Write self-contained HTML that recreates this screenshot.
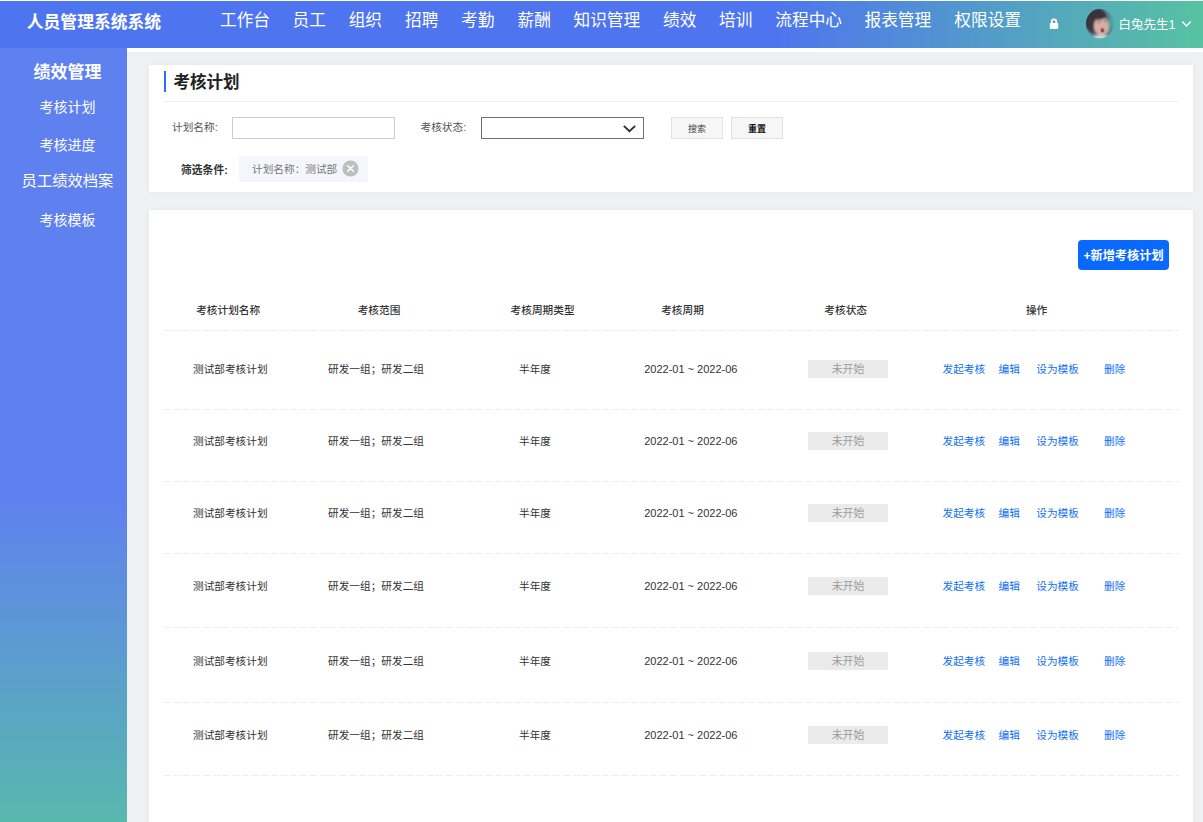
<!DOCTYPE html>
<html lang="zh-CN">
<head>
<meta charset="utf-8">
<title>考核计划</title>
<style>
*{box-sizing:border-box;margin:0;padding:0}
html,body{width:1203px;height:822px;overflow:hidden;background:#eff0f2}
body{position:relative;font-family:"Liberation Sans","Noto Sans CJK SC",sans-serif;font-size:10.67px;color:#333}
.abs{position:absolute;white-space:nowrap}
#topline{left:0;top:0;width:1203px;height:1px;background:#fff}
#header{left:0;top:1px;width:1203px;height:47px;background:linear-gradient(90deg,#4e75ef 0%,#4e75ef 64.5%,#57c2a2 100%)}
#strip{left:127px;top:48px;width:1076px;height:4px;background:#fff}
#logo{left:26.8px;top:2.8px;height:40px;line-height:40px;font-size:16.8px;font-weight:700;color:#fff}
.nav{top:1.5px;height:38px;line-height:38px;font-size:16.7px;font-weight:400;color:#fff}
#sidebar{left:0;top:48px;width:127px;height:774px;background:linear-gradient(180deg,#5f81f0 0%,#5f81f0 58%,#58b8ad 100%)}
.side{left:0;width:135px;text-align:center;color:#fff;font-weight:400}
.card{background:#fff;box-shadow:0 0 6px rgba(0,0,0,.04)}
#card1{left:149px;top:65px;width:1044px;height:127px}
#card2{left:149px;top:210px;width:1044px;height:620px}
.lbl{color:#555;font-size:10.67px;line-height:14px}
.th{font-weight:500;color:#333;line-height:14px;transform:translateX(-50%)}
.td{color:#333;line-height:14px;transform:translateX(-50%)}
.lk{color:#1070f5;line-height:14px}
.dash{left:164px;width:1015px;height:1px;background:repeating-linear-gradient(90deg,#eee 0,#eee 7px,transparent 7px,transparent 9.73px)}
.badge{width:80px;height:17.8px;background:#ebebeb;color:#9c9c9c;text-align:center;line-height:19.5px;left:808px;font-size:10.9px}
</style>
</head>
<body>
<div class="abs" id="header"></div>
<div class="abs" id="topline"></div>
<div class="abs" id="strip"></div>
<div class="abs" id="sidebar"></div>
<div class="abs" id="logo">人员管理系统系统</div>
<div class="abs nav" style="left:220px">工作台</div>
<div class="abs nav" style="left:292.5px">员工</div>
<div class="abs nav" style="left:348.7px">组织</div>
<div class="abs nav" style="left:405px">招聘</div>
<div class="abs nav" style="left:461px">考勤</div>
<div class="abs nav" style="left:517.5px">薪酬</div>
<div class="abs nav" style="left:573.5px">知识管理</div>
<div class="abs nav" style="left:663px">绩效</div>
<div class="abs nav" style="left:719px">培训</div>
<div class="abs nav" style="left:775.3px">流程中心</div>
<div class="abs nav" style="left:864.5px">报表管理</div>
<div class="abs nav" style="left:954.3px">权限设置</div>
<svg class="abs" style="left:1049px;top:18px" width="10" height="12" viewBox="0 0 10 12"><path d="M2.8 5.2V3.6a2.2 2.2 0 0 1 4.4 0V5.2" fill="none" stroke="#fff" stroke-width="1.8"/><rect x="0.8" y="5" width="8.4" height="6" rx="0.8" fill="#fff"/></svg>
<svg class="abs" id="avatar" style="left:1085px;top:8px" width="30" height="32" viewBox="0 0 30 32"><defs><clipPath id="avc"><ellipse cx="14.6" cy="15.8" rx="13.7" ry="14.7"/></clipPath><filter id="avb" x="-10%" y="-10%" width="120%" height="120%"><feGaussianBlur stdDeviation="0.9"/></filter></defs><g clip-path="url(#avc)"><rect width="30" height="32" fill="#5f8390"/><g filter="url(#avb)"><rect x="21" y="0" width="9" height="32" fill="#5c8894"/><ellipse cx="27.2" cy="13" rx="2" ry="5.5" fill="#2fb7a3"/><ellipse cx="11" cy="12.5" rx="11.5" ry="13" fill="#3a3641"/><ellipse cx="16" cy="31.5" rx="10" ry="4.5" fill="#cfd5d8"/><ellipse cx="16.4" cy="18" rx="7.6" ry="9.6" fill="#d4b0a4"/><ellipse cx="13" cy="7.5" rx="8.5" ry="4.2" fill="#37333d"/><ellipse cx="14" cy="13.8" rx="1.3" ry="0.9" fill="#5a4a50"/><ellipse cx="20.2" cy="13.2" rx="1.2" ry="0.9" fill="#5a4a50"/></g><ellipse cx="17.4" cy="22.4" rx="1.5" ry="2.1" fill="#8c2b3d" filter="url(#avb)" opacity="0.95"/><ellipse cx="17.4" cy="22.4" rx="1.1" ry="1.6" fill="#8c2b3d"/></g></svg>
<div class="abs" style="left:1118.6px;top:14.8px;height:20px;line-height:20px;font-size:12.5px;color:#fff;font-weight:400">白兔先生1</div>
<svg class="abs" style="left:1181px;top:20px" width="11" height="8" viewBox="0 0 11 8"><path d="M1.2 1.6L5.5 6L9.8 1.6" fill="none" stroke="#fff" stroke-width="1.4"/></svg>

<div class="abs side" style="top:60.5px;font-size:17px;font-weight:700;line-height:24px">绩效管理</div>
<div class="abs side" style="top:97px;font-size:14px;line-height:20px">考核计划</div>
<div class="abs side" style="top:135px;font-size:14px;line-height:20px">考核进度</div>
<div class="abs side" style="top:171px;font-size:15.3px;line-height:20px">员工绩效档案</div>
<div class="abs side" style="top:209.5px;font-size:14px;line-height:20px">考核模板</div>

<div class="abs card" id="card1"></div>
<div class="abs" style="left:163.8px;top:71px;width:2.4px;height:21px;background:#2e6bf6"></div>
<div class="abs" style="left:173.5px;top:70px;height:24px;line-height:24px;font-size:16.5px;font-weight:700;color:#222">考核计划</div>
<div class="abs" style="left:164px;top:101px;width:1014px;height:1px;background:#eee"></div>
<div class="abs lbl" style="left:172px;top:120.3px">计划名称:</div>
<div class="abs" style="left:232px;top:117px;width:163px;height:21.5px;border:1px solid #ccc;background:#fff"></div>
<div class="abs lbl" style="left:420.5px;top:120.3px">考核状态:</div>
<div class="abs" style="left:481px;top:117px;width:163px;height:21.5px;border:1px solid #707070;background:#fff"></div>
<svg class="abs" style="left:622px;top:124px" width="15" height="10" viewBox="0 0 15 10"><path d="M1.8 1.8L7.5 7.2L13.2 1.8" fill="none" stroke="#2c2c2c" stroke-width="1.8"/></svg>
<div class="abs" style="left:671px;top:117px;width:52px;height:21.5px;border:1px solid #e2e2e2;background:#f6f6f6;text-align:center;line-height:22.5px;font-size:9px;color:#444">搜索</div>
<div class="abs" style="left:731px;top:117px;width:52px;height:21.5px;border:1px solid #e2e2e2;background:#f6f6f6;text-align:center;line-height:22.5px;font-size:9px;color:#111;font-weight:700">重置</div>
<div class="abs" style="left:181px;top:162.7px;line-height:14px;font-size:10.8px;font-weight:700;color:#333">筛选条件:</div>
<div class="abs" style="left:239px;top:156px;width:129px;height:25.7px;background:#f4f6fb;border-radius:2px"></div>
<div class="abs" style="left:252px;top:162px;line-height:14px;font-size:10.67px;color:#777">计划名称：测试部</div>
<svg class="abs" style="left:342px;top:160.1px" width="17" height="17" viewBox="0 0 17 17"><circle cx="8.5" cy="8.5" r="8.1" fill="#bfbfbf"/><path d="M5.7 5.7L11.3 11.3M11.3 5.7L5.7 11.3" stroke="#fff" stroke-width="1.5" stroke-linecap="round"/></svg>

<div class="abs card" id="card2"></div>
<div class="abs" style="left:1078px;top:240px;width:91px;height:30px;border-radius:4px;background:#0969fe;color:#fff;font-weight:700;font-size:12.2px;text-align:center;line-height:33px">+新增考核计划</div>

<div class="abs th" style="left:228.2px;top:303px">考核计划名称</div>
<div class="abs th" style="left:379px;top:303px">考核范围</div>
<div class="abs th" style="left:542.6px;top:303px">考核周期类型</div>
<div class="abs th" style="left:682.5px;top:303px">考核周期</div>
<div class="abs th" style="left:845.7px;top:303px">考核状态</div>
<div class="abs th" style="left:1036.6px;top:303px">操作</div>
<div class="abs dash" style="top:330px"></div>
<div class="abs td" style="left:230.3px;top:362px">测试部考核计划</div>
<div class="abs td" style="left:376px;top:362px">研发一组；研发二组</div>
<div class="abs td" style="left:535px;top:362px">半年度</div>
<div class="abs td" style="left:690.8px;top:362px;font-size:11px">2022-01 ~ 2022-06</div>
<div class="abs badge" style="top:360.3px">未开始</div>
<div class="abs lk" style="left:942.5px;top:362px">发起考核</div>
<div class="abs lk" style="left:998.5px;top:362px">编辑</div>
<div class="abs lk" style="left:1036.3px;top:362px">设为模板</div>
<div class="abs lk" style="left:1104px;top:362px">删除</div>
<div class="abs dash" style="top:408.8px"></div>
<div class="abs td" style="left:230.3px;top:433.5px">测试部考核计划</div>
<div class="abs td" style="left:376px;top:433.5px">研发一组；研发二组</div>
<div class="abs td" style="left:535px;top:433.5px">半年度</div>
<div class="abs td" style="left:690.8px;top:433.5px;font-size:11px">2022-01 ~ 2022-06</div>
<div class="abs badge" style="top:431.8px">未开始</div>
<div class="abs lk" style="left:942.5px;top:433.5px">发起考核</div>
<div class="abs lk" style="left:998.5px;top:433.5px">编辑</div>
<div class="abs lk" style="left:1036.3px;top:433.5px">设为模板</div>
<div class="abs lk" style="left:1104px;top:433.5px">删除</div>
<div class="abs dash" style="top:480.8px"></div>
<div class="abs td" style="left:230.3px;top:506px">测试部考核计划</div>
<div class="abs td" style="left:376px;top:506px">研发一组；研发二组</div>
<div class="abs td" style="left:535px;top:506px">半年度</div>
<div class="abs td" style="left:690.8px;top:506px;font-size:11px">2022-01 ~ 2022-06</div>
<div class="abs badge" style="top:504.3px">未开始</div>
<div class="abs lk" style="left:942.5px;top:506px">发起考核</div>
<div class="abs lk" style="left:998.5px;top:506px">编辑</div>
<div class="abs lk" style="left:1036.3px;top:506px">设为模板</div>
<div class="abs lk" style="left:1104px;top:506px">删除</div>
<div class="abs dash" style="top:552.8px"></div>
<div class="abs td" style="left:230.3px;top:579px">测试部考核计划</div>
<div class="abs td" style="left:376px;top:579px">研发一组；研发二组</div>
<div class="abs td" style="left:535px;top:579px">半年度</div>
<div class="abs td" style="left:690.8px;top:579px;font-size:11px">2022-01 ~ 2022-06</div>
<div class="abs badge" style="top:577.3px">未开始</div>
<div class="abs lk" style="left:942.5px;top:579px">发起考核</div>
<div class="abs lk" style="left:998.5px;top:579px">编辑</div>
<div class="abs lk" style="left:1036.3px;top:579px">设为模板</div>
<div class="abs lk" style="left:1104px;top:579px">删除</div>
<div class="abs dash" style="top:626.5px"></div>
<div class="abs td" style="left:230.3px;top:654px">测试部考核计划</div>
<div class="abs td" style="left:376px;top:654px">研发一组；研发二组</div>
<div class="abs td" style="left:535px;top:654px">半年度</div>
<div class="abs td" style="left:690.8px;top:654px;font-size:11px">2022-01 ~ 2022-06</div>
<div class="abs badge" style="top:652.3px">未开始</div>
<div class="abs lk" style="left:942.5px;top:654px">发起考核</div>
<div class="abs lk" style="left:998.5px;top:654px">编辑</div>
<div class="abs lk" style="left:1036.3px;top:654px">设为模板</div>
<div class="abs lk" style="left:1104px;top:654px">删除</div>
<div class="abs dash" style="top:702.0px"></div>
<div class="abs td" style="left:230.3px;top:728px">测试部考核计划</div>
<div class="abs td" style="left:376px;top:728px">研发一组；研发二组</div>
<div class="abs td" style="left:535px;top:728px">半年度</div>
<div class="abs td" style="left:690.8px;top:728px;font-size:11px">2022-01 ~ 2022-06</div>
<div class="abs badge" style="top:726.3px">未开始</div>
<div class="abs lk" style="left:942.5px;top:728px">发起考核</div>
<div class="abs lk" style="left:998.5px;top:728px">编辑</div>
<div class="abs lk" style="left:1036.3px;top:728px">设为模板</div>
<div class="abs lk" style="left:1104px;top:728px">删除</div>
<div class="abs dash" style="top:775.2px"></div>
</body>
</html>
